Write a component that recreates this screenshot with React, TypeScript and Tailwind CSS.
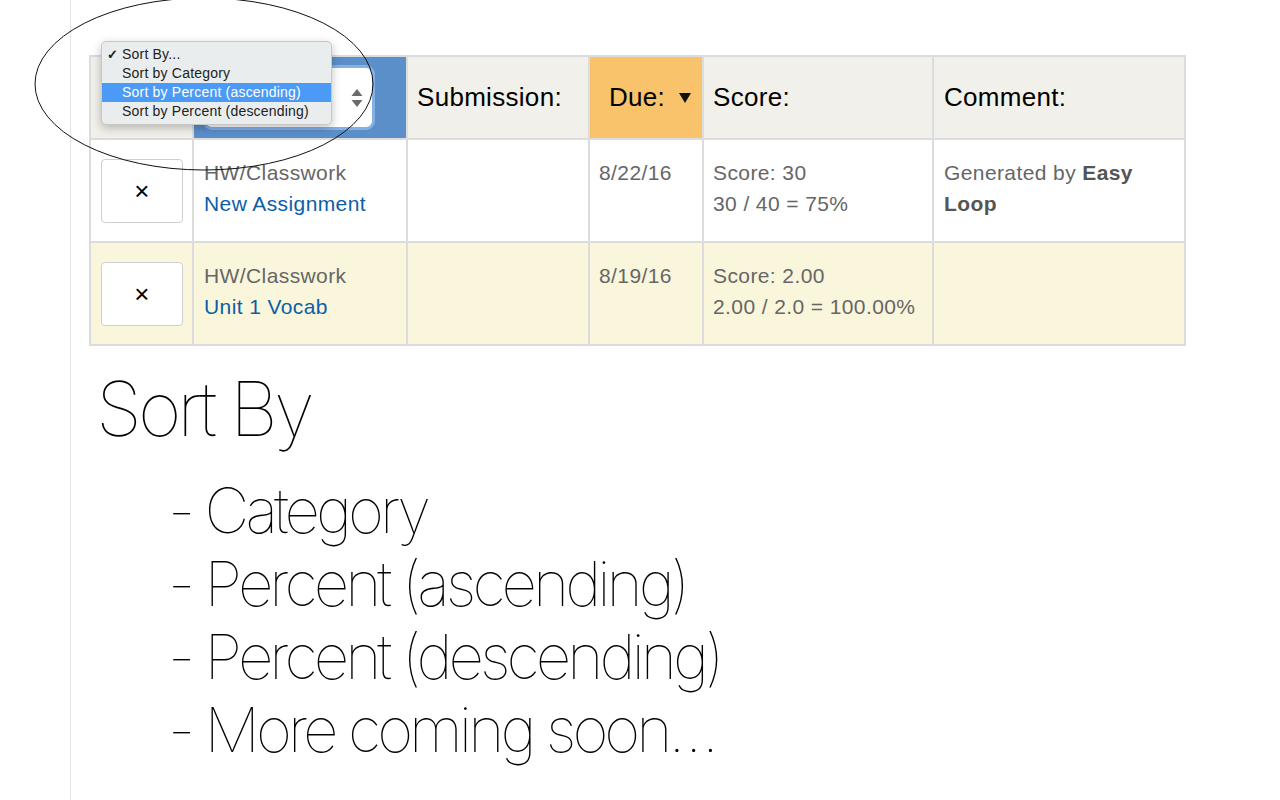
import React from 'react';

const rows = [
  {
    category: 'HW/Classwork',
    title: 'New Assignment',
    due: '8/22/16',
    score: 'Score: 30',
    calc: '30 / 40 = 75%',
    comment: true,
    bg: 'bg-white',
  },
  {
    category: 'HW/Classwork',
    title: 'Unit 1 Vocab',
    due: '8/19/16',
    score: 'Score: 2.00',
    calc: '2.00 / 2.0 = 100.00%',
    comment: false,
    bg: 'bg-[#faf6dc]',
  },
];

const menuItems = [
  { label: 'Sort By...', checked: true },
  { label: 'Sort by Category' },
  { label: 'Sort by Percent (ascending)', active: true },
  { label: 'Sort by Percent (descending)' },
];

function SortMenu() {
  return (
    <div className="absolute left-[101px] top-[41px] w-[231px] rounded-[5px] border border-[#c8c8c8] bg-[#e9edee] py-[3px] shadow-[0_3px_10px_rgba(0,0,0,0.25)] z-10">
      {menuItems.map((item) => (
        <div
          key={item.label}
          className={`relative h-[19px] pl-[20px] text-[14px] leading-[19px] tracking-[0.2px] ${
            item.active ? 'bg-[#4a9af6] text-white' : 'text-[#222]'
          }`}
        >
          {item.checked && <span className="absolute left-[5px] top-0 text-[13px] font-bold">✓</span>}
          {item.label}
        </div>
      ))}
    </div>
  );
}

export default function App() {
  return (
    <div
      className="relative min-h-[800px] bg-white"
      style={{ fontFamily: '"Liberation Sans", Arial, sans-serif' }}
    >
      <div className="ml-[70px] min-h-[800px] border-l border-[#e4e4e4] pl-[18px] pt-[55px]">
        <table className="border-collapse table-fixed w-[1095px]">
          <colgroup>
            <col className="w-[103px]" />
            <col className="w-[214px]" />
            <col className="w-[182px]" />
            <col className="w-[114px]" />
            <col className="w-[230px]" />
            <col className="w-[252px]" />
          </colgroup>
          <thead>
            <tr className="h-[83px] text-[26px] tracking-[0.3px] text-black">
              <th className="border-2 border-[#dcdcdc] bg-[#f2f0ea]" />
              <th className="border-2 border-[#dcdcdc] bg-[#5b8fca] p-0">
                <div className="ml-[12px] flex h-[59px] w-[166px] items-center justify-end rounded-[6px] bg-white pr-[9px] shadow-[0_0_0_3px_rgba(150,190,240,0.7)]">
                  <svg width="12" height="20" viewBox="0 0 12 20">
                    <path d="M6 1 L11.5 8 L0.5 8 Z" fill="#6b6b6b" />
                    <path d="M6 19 L11.5 12 L0.5 12 Z" fill="#6b6b6b" />
                  </svg>
                </div>
              </th>
              <th className="border-2 border-[#dcdcdc] bg-[#f2f0ea] px-[9px] text-left font-normal">
                Submission:
              </th>
              <th className="border-2 border-[#dcdcdc] bg-[#f8c36a] pl-[19px] text-left font-normal">
                <span className="inline-flex items-center gap-[14px]">
                  Due:
                  <svg width="12" height="10" viewBox="0 0 12 10">
                    <path d="M0 0 L12 0 L6 10 Z" fill="#111" />
                  </svg>
                </span>
              </th>
              <th className="border-2 border-[#dcdcdc] bg-[#f2f0ea] px-[9px] text-left font-normal">
                Score:
              </th>
              <th className="border-2 border-[#dcdcdc] bg-[#f2f0ea] px-[10px] text-left font-normal">
                Comment:
              </th>
            </tr>
          </thead>
          <tbody className="text-[21px] leading-[31px] tracking-[0.4px] text-[#666]">
            {rows.map((r) => (
              <tr key={r.title} className={`h-[103px] ${r.bg}`}>
                <td className="border-2 border-[#dcdcdc] px-[10px] align-middle">
                  <button className="flex h-[64px] w-[82px] items-center justify-center rounded-[4px] border border-[#cfcfcf] bg-white text-[26px] leading-none text-black">
                    ×
                  </button>
                </td>
                <td className="border-2 border-[#dcdcdc] px-[10px] pt-[17px] pb-[16px] align-top">
                  <div>{r.category}</div>
                  <div className="text-[#0b5ea8]">{r.title}</div>
                </td>
                <td className="border-2 border-[#dcdcdc]" />
                <td className="border-2 border-[#dcdcdc] px-[9px] pt-[17px] align-top">{r.due}</td>
                <td className="border-2 border-[#dcdcdc] px-[9px] pt-[17px] align-top">
                  <div>{r.score}</div>
                  <div>{r.calc}</div>
                </td>
                <td className="border-2 border-[#dcdcdc] px-[10px] pt-[17px] align-top">
                  {r.comment && (
                    <p>
                      Generated by <b className="text-[#555]">Easy</b>
                      <br />
                      <b className="text-[#555]">Loop</b>
                    </p>
                  )}
                </td>
              </tr>
            ))}
          </tbody>
        </table>

        <div className="text-black" style={{ fontFamily: 'Inter, "Liberation Sans", sans-serif' }}>
          <h1 className="mt-[18px] ml-[7px] text-[75px] font-thin leading-[90px] tracking-[-4px]">Sort By</h1>
          <ul className="mt-[20px] ml-[79px] text-[62px] font-thin leading-[73px] tracking-[-4px]">
            <li>- Category</li>
            <li>- Percent (ascending)</li>
            <li>- Percent (descending)</li>
            <li>- More coming soon…</li>
          </ul>
        </div>
      </div>

      <SortMenu />

      <svg className="pointer-events-none absolute left-0 top-0 z-20" width="400" height="180">
        <ellipse cx="204" cy="84" rx="169" ry="86" fill="none" stroke="#111" strokeWidth="1" />
      </svg>
    </div>
  );
}
